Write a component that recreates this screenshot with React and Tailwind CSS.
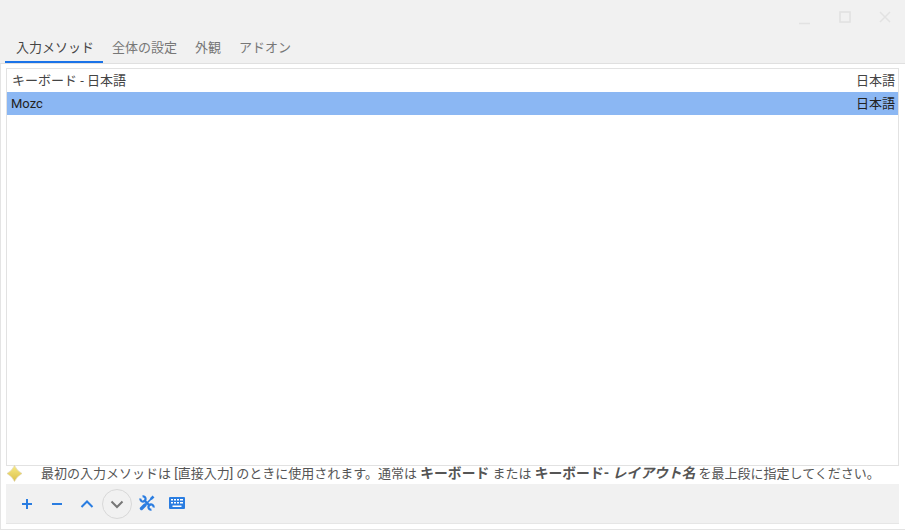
const font = { fontFamily: 'Roboto,"Noto Sans CJK JP",sans-serif' };

function Tab({ children, active }) {
  return (
    <div className={active ? "h-[29px] pl-[11px] pr-[9px] flex items-center text-[#444444] border-b-2 border-[#1a73e8]" : "h-[29px] px-[9px] flex items-center text-[#777777] border-b-2 border-transparent"}>
      {children}
    </div>
  );
}

function Row({ name, selected }) {
  return (
    <div className={selected ? "h-[23px] bg-[#8bb7f3] flex items-center justify-between pl-1 pr-[3px] text-[#222222]" : "h-[23px] flex items-center justify-between pl-[5px] pr-[3px] text-[#444444]"}>
      <span>{name}</span>
      <span>日本語</span>
    </div>
  );
}

const Stroke = ({ children }) => (
  <svg width="16" height="16" viewBox="0 0 16 16" fill="none" stroke="#2a7de1" strokeWidth="2">{children}</svg>
);

export default function App() {
  return (
    <div className="w-[905px] h-[530px] bg-white flex flex-col overflow-hidden text-[13px]" style={font}>
      <div className="bg-[#f1f1f1] h-[64px] flex flex-col border-b border-[#e0e0e0] shrink-0">
        <div className="h-[34px] flex justify-end items-center gap-[20px] pr-[10px] shrink-0">
          <svg width="20" height="20" viewBox="0 0 20 20" fill="none" stroke="#e2e2e2" strokeWidth="1.5"><path d="M4 16.500h11" /></svg>
          <svg width="20" height="20" viewBox="0 0 20 20" fill="none" stroke="#e0e0e0" strokeWidth="1.5"><rect x="5" y="5" width="10" height="10" /></svg>
          <svg width="20" height="20" viewBox="0 0 20 20" fill="none" stroke="#e2e2e2" strokeWidth="1.5"><path d="M5 5l10 10M15 5L5 15" /></svg>
        </div>
        <div className="flex pl-[5px] h-[29px]">
          <Tab active>入力メソッド</Tab>
          <Tab>全体の設定</Tab>
          <Tab>外観</Tab>
          <Tab>アドオン</Tab>
        </div>
      </div>
      <div className="flex-1 flex flex-col pl-[6px] pr-[6px] pb-[6px] pt-[4px] border-b border-l border-[#e4e4e4] min-h-0 relative">
        <div className="h-[398px] border border-[#e2e2e2] shrink-0 bg-white -ml-px">
          <Row name="キーボード - 日本語" />
          <Row name="Mozc" selected />
        </div>
        <div className="h-[18px] flex items-center shrink-0 text-[#555555] -ml-px">
          <svg width="17" height="17" viewBox="0 0 17 17" className="shrink-0 -mt-[3px]">
            <defs>
              <linearGradient id="star" x1="0" y1="0" x2="0" y2="1">
                <stop offset="0" stopColor="#f7ea84" />
                <stop offset="1" stopColor="#dcc04a" />
              </linearGradient>
            </defs>
            <path d="M8.500 .500 Q10.500 5.500 16 8.500 Q10.500 11.500 8.500 16.500 Q6.500 11.500 1 8.500 Q6.500 5.500 8.500 .500 Z" fill="url(#star)" stroke="#d8cfa8" strokeWidth="0.600" />
          </svg>
          <span className="ml-[18px] whitespace-nowrap -mt-[3px]">最初の入力メソッドは [直接入力] のときに使用されます。通常は <b className="font-bold text-[13.800px]">キーボード</b> または <b className="font-bold text-[13.800px]">キーボード- <i>レイアウト名</i></b> を最上段に指定してください。</span>
        </div>
        <div className="h-[40px] bg-[#f1f1f1] border-b border-[#e6e6e6] flex items-center pl-[13px] shrink-0 -ml-px">
          <div className="w-[16px] flex justify-center mr-[14px]"><Stroke><path d="M8 3v10M3 8h10" /></Stroke></div>
          <div className="w-[16px] flex justify-center mr-[14px]"><Stroke><path d="M3 8h10" /></Stroke></div>
          <div className="w-[16px] flex justify-center mr-[7px]"><Stroke><path d="M2.500 11l5.500-5.500 5.500 5.500" /></Stroke></div>
          <div className="w-[30px] h-[30px] rounded-full border border-[#d8d8d8] flex items-center justify-center mr-[7px]">
            <svg width="16" height="16" viewBox="0 0 16 16" fill="none" stroke="#777777" strokeWidth="2"><path d="M2.500 5.500l5.500 5.500 5.500-5.500" /></svg>
          </div>
          <svg width="16" height="16" viewBox="0 0 16 16" className="mr-[14px] -mt-px" fill="none" stroke="#2a7de1">
            <path d="M5 5L11 11" strokeWidth="2.400" />
            <path d="M3.550 1.440A2.600 2.600 0 1 1 1.440 3.550" strokeWidth="2.200" />
            <path d="M12.450 14.560A2.600 2.600 0 1 1 14.560 12.450" strokeWidth="2.200" />
            <path d="M6 10L12.500 3.500" strokeWidth="1.600" />
            <path d="M11.800 4.200L14.500 1.500" strokeWidth="2.600" />
            <path d="M2.500 13.500L6 10" strokeWidth="3.400" strokeLinecap="round" />
          </svg>
          <svg width="16" height="12" viewBox="0 0 16 12" className="-mt-px">
            <rect width="16" height="12" rx="1" fill="#2a7de1" />
            <g fill="#fff">
              <rect x="2" y="2" width="2" height="1.500" /><rect x="5" y="2" width="2" height="1.500" /><rect x="8" y="2" width="2" height="1.500" /><rect x="11" y="2" width="3" height="1.500" />
              <rect x="2" y="5" width="2" height="1.500" /><rect x="5" y="5" width="2" height="1.500" /><rect x="8" y="5" width="2" height="1.500" /><rect x="11" y="5" width="3" height="1.500" />
              <rect x="3.500" y="8.500" width="9" height="1.500" />
            </g>
          </svg>
        </div>
      </div>
    </div>
  );
}
